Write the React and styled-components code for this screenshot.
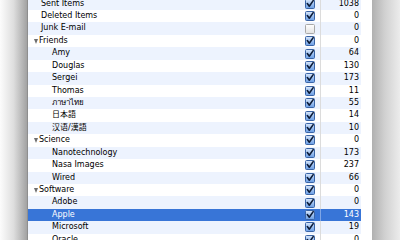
import React from "react";
import styled, { createGlobalStyle } from "styled-components";

const ROW_H = 12.43;

const GlobalStyle = createGlobalStyle`
  html, body {
    margin: 0;
    padding: 0;
    height: 100%;
    overflow: hidden;
    background: #fff;
  }
`;

const Page = styled.div`
  display: flex;
  width: 400px;
  height: 240px;
  overflow: hidden;
  font-family: "DejaVu Sans", "Noto Sans CJK JP", sans-serif;
  font-size: 8px;
  color: #000;
`;

const Shadow = styled.div`
  flex: 0 0 28px;
  height: 100%;
  background: ${(p) =>
    p.$side === "left"
      ? "linear-gradient(to right, #fcfcfc 0%, #dedede 50%, #a2a2a2 100%)"
      : "linear-gradient(to right, #b0b0b0 0%, #d0d0d0 45%, #ececec 100%)"};
  border-right: ${(p) => (p.$side === "left" ? "1px solid #8e8e8e" : "none")};
  box-sizing: border-box;
`;

const Window = styled.div`
  flex: 0 0 344px;
  height: 100%;
  background: #fff;
  padding-right: 11px;
  box-sizing: border-box;
  overflow: hidden;
`;

const Outline = styled.div`
  display: flex;
  flex-direction: column;
  margin-top: -2.4px;
`;

const Row = styled.div`
  display: grid;
  grid-template-columns: 272px 20px 41px;
  height: ${ROW_H}px;
  line-height: ${ROW_H}px;
  background: ${(p) => (p.$selected ? "#3875d7" : p.$striped ? "#edf3fe" : "#fff")};
  color: ${(p) => (p.$selected ? "#fff" : "#000")};
  white-space: nowrap;
`;

const NameCell = styled.div`
  display: flex;
  align-items: center;
  padding-left: ${(p) => (p.$group ? 5.5 : p.$level > 0 ? 24 : 13)}px;
  overflow: hidden;
`;

const Triangle = styled.span`
  width: 0;
  height: 0;
  border-left: 2.6px solid transparent;
  border-right: 2.6px solid transparent;
  border-top: 5px solid #6e6e6e;
  margin-right: 1.5px;
`;

const CheckCell = styled.div`
  display: flex;
  align-items: center;
  justify-content: center;
`;

const CountCell = styled.div`
  text-align: right;
  padding-right: 2px;
  border-left: 1px solid ${(p) => (p.$selected ? "#7fa6e6" : "#dcdcdc")};
`;

const Box = styled.svg`
  width: 10px;
  height: 10px;
  display: block;
`;

function Checkbox({ checked }) {
  return (
    <Box viewBox="0 0 10 10">
      <defs>
        <linearGradient id="cbOn" x1="0" y1="0" x2="0" y2="1">
          <stop offset="0" stopColor="#dce9fb" />
          <stop offset="0.5" stopColor="#9dc0f0" />
          <stop offset="1" stopColor="#6a9de4" />
        </linearGradient>
        <linearGradient id="cbOff" x1="0" y1="0" x2="0" y2="1">
          <stop offset="0" stopColor="#ffffff" />
          <stop offset="1" stopColor="#e2e2e2" />
        </linearGradient>
      </defs>
      <rect
        x="0.5"
        y="0.5"
        width="9"
        height="9"
        rx="1"
        fill={checked ? "url(#cbOn)" : "url(#cbOff)"}
        stroke={checked ? "#3a64a6" : "#a8a8a8"}
      />
      {checked && (
        <path
          d="M2.3 4.6 L4.3 7.2 L8.2 1.6"
          fill="none"
          stroke="#0d1c38"
          strokeWidth="1.6"
          strokeLinecap="round"
          strokeLinejoin="round"
        />
      )}
    </Box>
  );
}

const rows = [
  { label: "Sent Items", checked: true, count: 1038 },
  { label: "Deleted Items", checked: true, count: 0 },
  { label: "Junk E-mail", checked: false, count: 0 },
  { label: "Friends", group: true, checked: true, count: 0 },
  { label: "Amy", level: 1, checked: true, count: 64 },
  { label: "Douglas", level: 1, checked: true, count: 130 },
  { label: "Sergei", level: 1, checked: true, count: 173 },
  { label: "Thomas", level: 1, checked: true, count: 11 },
  { label: "ภาษาไทย", level: 1, checked: true, count: 55 },
  { label: "日本語", level: 1, checked: true, count: 14 },
  { label: "汉语/漢語", level: 1, checked: true, count: 10 },
  { label: "Science", group: true, checked: true, count: 0 },
  { label: "Nanotechnology", level: 1, checked: true, count: 173 },
  { label: "Nasa Images", level: 1, checked: true, count: 237 },
  { label: "Wired", level: 1, checked: true, count: 66 },
  { label: "Software", group: true, checked: true, count: 0 },
  { label: "Adobe", level: 1, checked: true, count: 0 },
  { label: "Apple", level: 1, checked: true, count: 143, selected: true },
  { label: "Microsoft", level: 1, checked: true, count: 19 },
  { label: "Oracle", level: 1, checked: true, count: 0 },
];

export default function App() {
  return (
    <>
      <GlobalStyle />
      <Page>
        <Shadow $side="left" />
        <Window>
          <Outline>
            {rows.map((r, i) => (
              <Row key={r.label} $striped={i % 2 === 0} $selected={r.selected}>
                <NameCell $group={r.group} $level={r.level || 0}>
                  {r.group && <Triangle />}
                  {r.label}
                </NameCell>
                <CheckCell>
                  <Checkbox checked={r.checked} />
                </CheckCell>
                <CountCell $selected={r.selected}>{r.count}</CountCell>
              </Row>
            ))}
          </Outline>
        </Window>
        <Shadow $side="right" />
      </Page>
    </>
  );
}
